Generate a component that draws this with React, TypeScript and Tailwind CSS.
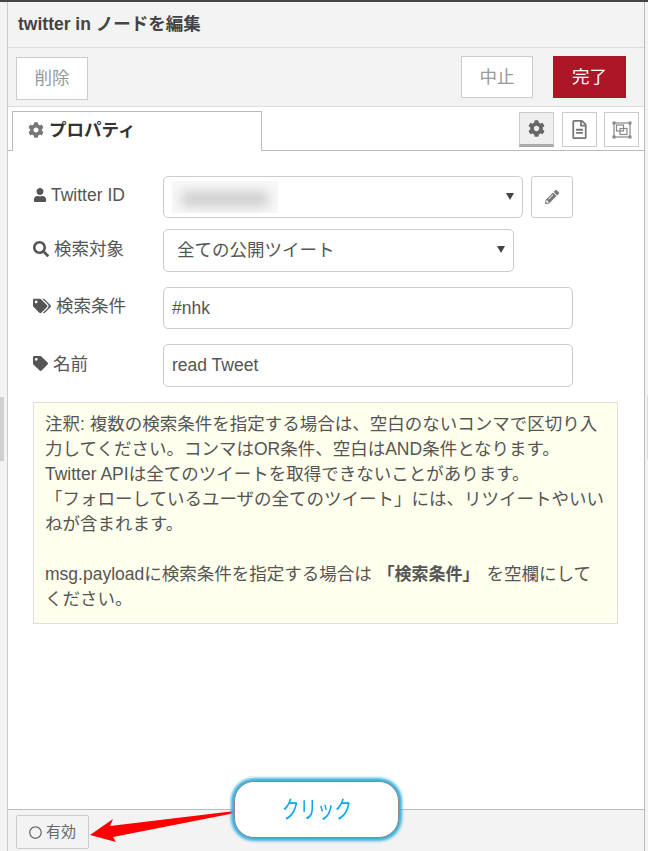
import React from 'react';
import { FaCog, FaUser, FaSearch, FaTags, FaTag, FaPencilAlt, FaRegFileAlt, FaRegCircle } from 'react-icons/fa';

const font = 'font-["Liberation_Sans","Noto_Sans_CJK_JP",sans-serif]';

const FormRow = ({ icon, label, gap, className, children }: { icon: React.ReactNode; label: string; gap: string; className: string; children: React.ReactNode }) => (
  <div className={`flex ${className}`}>
    <label className={`w-[130px] flex items-center pb-[4px] text-[17.5px] leading-[24px] text-[#555] ${gap}`}>
      {icon}
      <span>{label}</span>
    </label>
    {children}
  </div>
);

const Arrow = () => <span className="absolute right-[8px] top-[16px] w-0 h-0 border-x-[4px] border-x-transparent border-t-[7px] border-t-[#444]" />;

const ObjectGroupIcon = () => (
  <svg width="20" height="18" viewBox="0 0 20 18" fill="none">
    <rect x="2" y="2" width="16" height="14" stroke="#888" strokeWidth="1.2" />
    <rect x="0.5" y="0.5" width="3" height="3" fill="#888" />
    <rect x="16.5" y="0.5" width="3" height="3" fill="#888" />
    <rect x="0.5" y="14.5" width="3" height="3" fill="#888" />
    <rect x="16.5" y="14.5" width="3" height="3" fill="#888" />
    <rect x="4.5" y="4" width="7" height="6" stroke="#888" strokeWidth="1.2" />
    <rect x="8" y="7.5" width="7" height="6" stroke="#888" strokeWidth="1.2" />
  </svg>
);

export default function App() {
  return (
    <div className={`w-[648px] h-[851px] overflow-hidden flex flex-col relative bg-[#f3f3f3] ${font}`}>
      <div className="h-[2px] bg-[#444]" />
      <div className="flex-1 flex min-h-0">
        <div className="w-[7px] flex items-center">
          <div className="w-[4px] h-[64px] mt-[4px] bg-[#d0d0d0]" />
        </div>
        <div className="w-[638px] flex flex-col border-l border-l-[#ccc] border-r border-r-[#bbb]">
          <div className="h-[46px] border-b border-[#ddd] px-[10px] flex items-center text-[17.5px] font-bold text-[#444]">
            twitter in ノードを編集
          </div>
          <div className="h-[59px] border-b border-[#ddd] flex justify-between pl-[8px] pr-[18px]">
            <button className="mt-[9px] w-[72px] h-[43px] bg-white border border-[#ccc] text-[#999] text-[17.5px]">削除</button>
            <div className="flex gap-[20px] pt-[8px]">
              <button className="w-[72px] h-[42px] bg-white border border-[#ccc] text-[#999] text-[17.5px]">中止</button>
              <button className="w-[73px] h-[42px] bg-[#ad1625] text-white text-[17.5px]">完了</button>
            </div>
          </div>
          <div className="flex-1 bg-white flex flex-col min-h-0">
            <div className="h-[44px] border-b border-[#bbb] flex justify-between items-end pl-[4px] pr-[5px] shrink-0">
              <div className="w-[250px] h-[40px] -mb-px pb-[3px] bg-white border border-b-0 border-[#bbb] flex items-center pl-[15px] gap-[5px] text-[17.5px] font-bold text-[#333]">
                <FaCog className="text-[16px] text-[#777]" />
                プロパティ
              </div>
              <div className="flex gap-[7px] mb-[3px]">
                <button className="mr-[1px] w-[35px] h-[35px] bg-[#efefef] border border-[#ccc] border-b-[3px] border-b-[#aaa] flex items-center justify-center text-[#666] text-[17px]"><FaCog /></button>
                <button className="w-[35px] h-[35px] bg-white border border-[#ccc] flex items-center justify-center text-[#777] text-[19px]"><FaRegFileAlt /></button>
                <button className="w-[35px] h-[35px] bg-white border border-[#ccc] flex items-center justify-center"><ObjectGroupIcon /></button>
              </div>
            </div>
            <div className="flex-1 pl-[25px] pt-[25px]">
              <FormRow icon={<FaUser className="text-[14px]" />} label="Twitter ID" gap="gap-[4px]" className="h-[42px] mb-[11px]">
                <div className="relative w-[360px] h-[42px] bg-white border border-[#ccc] rounded-[5px] overflow-hidden">
                  <div className="absolute left-[8px] top-[4px] w-[106px] h-[32px] bg-[#f8f8f8] overflow-hidden">
                    <div className="mt-[10px] ml-[8px] w-[90px] h-[16px] rounded-full bg-[#cfcfcf] blur-[6px]" />
                  </div>
                  <Arrow />
                </div>
                <button className="ml-[8px] w-[42px] h-[42px] bg-white border border-[#ccc] rounded-[3px] flex items-center justify-center text-[#777] text-[14px]"><FaPencilAlt /></button>
              </FormRow>
              <FormRow icon={<FaSearch className="text-[16px]" />} label="検索対象" gap="gap-[5px]" className="h-[43px] mb-[15px]">
                <div className="relative w-[351px] h-[43px] bg-white border border-[#ccc] rounded-[5px] pl-[13px] flex items-center text-[17.5px] text-[#555]">
                  全ての公開ツイート
                  <Arrow />
                </div>
              </FormRow>
              <FormRow icon={<FaTags className="text-[18px]" />} label="検索条件" gap="gap-[5px]" className="h-[42px] mb-[15px]">
                <div className="w-[410px] h-[42px] bg-white border border-[#ccc] rounded-[5px] pl-[8px] flex items-center text-[17.5px] text-[#555]">#nhk</div>
              </FormRow>
              <FormRow icon={<FaTag className="text-[15px]" />} label="名前" gap="gap-[5px]" className="h-[43px] mb-[15px]">
                <div className="w-[410px] h-[43px] bg-white border border-[#ccc] rounded-[5px] pl-[8px] flex items-center text-[17.5px] text-[#555]">read Tweet</div>
              </FormRow>
              <div className="w-[585px] h-[222px] bg-[#ffe] border border-[#ddd] px-[11px] pt-[9px] text-[17.5px] leading-[25px] text-[#555] whitespace-nowrap">
                注釈: 複数の検索条件を指定する場合は、空白のないコンマで区切り入<br />
                力してください。コンマはOR条件、空白はAND条件となります。<br />
                Twitter APIは全てのツイートを取得できないことがあります。<br />
                「フォローしているユーザの全てのツイート」には、リツイートやいい<br />
                ねが含まれます。<br />
                <br />
                msg.payloadに検索条件を指定する場合は <b className="ml-[1px] mr-[2px] text-[17px]">「検索条件」</b> を空欄にして<br />
                ください。
              </div>
            </div>
          </div>
          <div className="h-[42px] border-t border-[#bbb] pl-[8px] pt-[5px] shrink-0">
            <button className="w-[73px] h-[34px] border border-[#ccc] rounded-[2px] bg-[#f3f3f3] flex items-center justify-center gap-[4px] text-[15px] text-[#666]">
              <FaRegCircle className="text-[13px]" />
              有効
            </button>
          </div>
        </div>
        <div className="flex-1 flex items-center justify-end">
          <div className="w-[1px] h-[64px] bg-[#ddd]" />
        </div>
      </div>

      <svg className="absolute left-0 top-0 pointer-events-none" width="648" height="851">
        <polygon points="90,835 113,819 110,826 235,811 235,813 113,837 116,842" fill="#ff0000" />
      </svg>
      <div className="absolute left-[234px] top-[781px] w-[165px] h-[57px] rounded-[20px] bg-white border border-[#888] shadow-[0_0_3px_3px_#3ab0dc] flex items-center justify-center text-[#00a8e8]">
        <span className="text-[24px] scale-x-[0.73]">クリック</span>
      </div>
    </div>
  );
}
